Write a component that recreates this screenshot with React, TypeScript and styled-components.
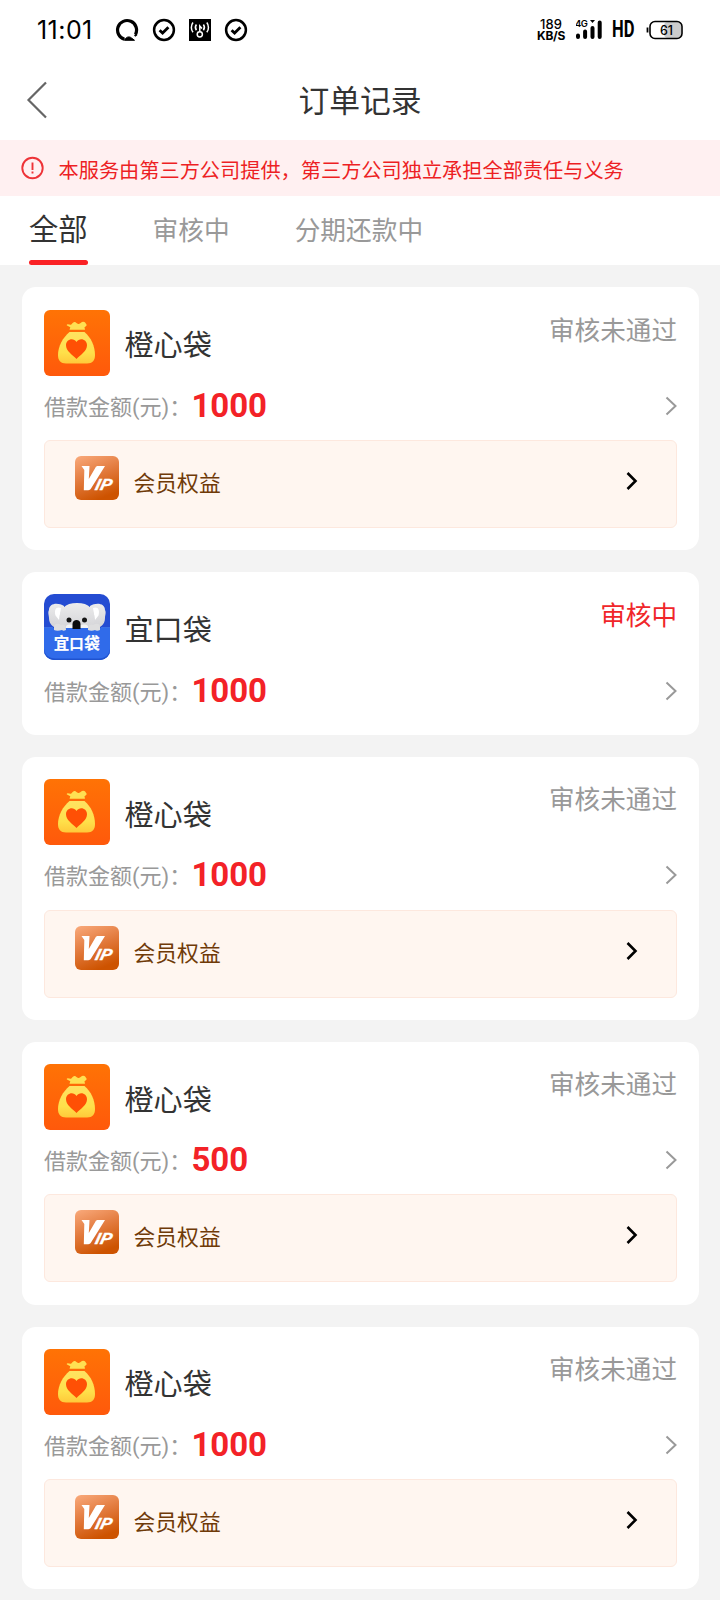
import React from "react";
import styled, { createGlobalStyle } from "styled-components";

const GlobalStyle = createGlobalStyle`
  * { box-sizing: border-box; }
  body {
    margin: 0;
    background: #f3f3f3;
    font-family: Roboto, "Noto Sans CJK SC", sans-serif;
    color: #333;
  }
`;

const Page = styled.div`
  width: 720px;
  height: 1600px;
  overflow: hidden;
  background: #f3f3f3;
`;

const StatusBar = styled.div`
  height: 60px;
  padding: 0 37px 0 37px;
  display: flex;
  align-items: center;
  justify-content: space-between;
  background: #fff;
  color: #000;
`;

const StatusGroup = styled.div<{ $gap: number }>`
  display: flex;
  align-items: center;
  gap: ${(p) => p.$gap}px;
`;

const Clock = styled.span`
  width: 65px;
  font: 400 25px/30px Inter, sans-serif;
  letter-spacing: 0.45px;
  white-space: nowrap;
`;

const NetSpeed = styled.div`
  width: 30px;
  margin-right: 1px;
  display: flex;
  flex-direction: column;
  align-items: center;
  font: 500 13px/11px Inter, sans-serif;
  white-space: nowrap;
  b { font-weight: 700; font-size: 12px; letter-spacing: -0.3px; }
`;

const Hd = styled.span`
  width: 26px;
  margin-right: -1px;
  font: 700 23px/28px "Roboto", sans-serif;
  transform: scaleX(0.72);
  transform-origin: left center;
  white-space: nowrap;
`;

const NavBar = styled.header`
  height: 80px;
  padding: 2px 26px 0;
  display: grid;
  grid-template-columns: 24px 1fr 24px;
  align-items: center;
  background: #fff;
  svg { margin-bottom: 2px; }
`;

const Title = styled.h1`
  margin: 0;
  padding-top: 1px;
  text-align: center;
  font-size: 30.8px;
  font-weight: 400;
  line-height: 44px;
`;

const Notice = styled.div`
  height: 56px;
  padding: 0 21px;
  display: flex;
  align-items: center;
  gap: 14.5px;
  background: #fff0f1;
  color: #ed1f24;
  font-size: 20.2px;
  line-height: 30px;
  white-space: nowrap;
  svg { margin-bottom: 1px; }
  span { padding-top: 5px; }
`;

const Tabs = styled.nav`
  height: 69px;
  padding-left: 29px;
  display: flex;
  gap: 65px;
  background: #fff;
`;

const Tab = styled.div<{ $active?: boolean }>`
  height: 69px;
  font-size: ${(p) => (p.$active ? 29.3 : 25.7)}px;
  line-height: ${(p) => (p.$active ? 68 : 71)}px;
  color: ${(p) => (p.$active ? "#333" : "#999")};
  display: flex;
  flex-direction: column;
`;

const Underline = styled.i`
  height: 5px;
  margin-top: -4px;
  border-radius: 3px;
  background: #fa2125;
`;

const List = styled.main`
  padding: 22.45px 21px 0 22px;
  display: flex;
  flex-direction: column;
  gap: 22px;
`;

const Card = styled.section<{ $vip: boolean }>`
  flex: none;
  height: ${(p) => (p.$vip ? 262.8 : 162.8)}px;
  padding: 22.2px 22px 0;
  border-radius: 14px;
  background: #fff;
`;

const CardHead = styled.div`
  height: 66px;
  display: flex;
  align-items: center;
`;

const Name = styled.span`
  flex: 1;
  margin-left: 14.5px;
  padding-top: 7px;
  font-size: 29.1px;
  line-height: 42px;
`;

const Status = styled.span<{ $pending?: boolean }>`
  align-self: flex-start;
  padding-top: 1.2px;
  font-size: 25.6px;
  line-height: 40px;
  color: ${(p) => (p.$pending ? "#f0262a" : "#999")};
`;

const AmountRow = styled.div`
  height: 64.4px;
  padding-bottom: 4px;
  display: flex;
  align-items: center;
  svg { margin-left: auto; }
`;

const Label = styled.span`
  width: 147.5px;
  font-size: 22px;
  line-height: 32px;
  padding-top: 4px;
  color: #999;
  white-space: nowrap;
`;

const Amount = styled.strong`
  font-family: Roboto, sans-serif;
  font-weight: 700;
  font-size: 33px;
  letter-spacing: -0.1px;
  line-height: 40px;
  color: #f32227;
`;

const VipBox = styled.div`
  height: 88px;
  padding: 15px 38px 0 30px;
  display: flex;
  align-items: flex-start;
  border: 1px solid #fde8de;
  border-radius: 6px;
  background: #fff6f0;
`;

const VipLabel = styled.span`
  flex: 1;
  margin-left: 14.5px;
  padding-top: 12px;
  font-size: 21.8px;
  line-height: 32px;
  color: #6f3a08;
`;

const VipArrow = styled.svg`
  margin-top: 16px;
`;

const CheckBadge = () => (
  <svg width="24" height="24" viewBox="0 0 24 24" fill="none" stroke="#000">
    <circle cx="12" cy="12" r="9.9" strokeWidth="2.5" />
    <path d="M7.6 12.2l3 2.9 5.800-5.800" strokeWidth="2.800" />
  </svg>
);

const RingIcon = () => (
  <svg width="24" height="24" viewBox="0 0 24 24" fill="none" stroke="#000">
    <path d="M9.500 21.200A9.500 9.500 0 1 1 20.500 16.400" strokeWidth="3.200" />
    <path d="M9.500 22.300c1-3 4.500-4.600 7-2.300l3 2.300z" fill="#000" strokeWidth="1" />
    <path d="M20 16.400l1.300 1.600" strokeWidth="2.600" />
  </svg>
);

const CastIcon = () => (
  <svg width="22" height="22" viewBox="0 0 22 22" fill="none" stroke="#fff" strokeWidth="1.500">
    <rect width="22" height="22" fill="#000" stroke="none" />
    <circle cx="10.800" cy="15.300" r="2.600" />
    <path d="M10.800 12.700V7l2.200 2.400" />
    <path d="M7.400 5.500c-1.300 1.800-1.300 4 0 5.800M14.400 5.500c1.300 1.800 1.300 4 0 5.800M4 3.500c-2.200 2.800-2.200 7 0 9.800M17.800 3.500c2.200 2.800 2.200 7 0 9.800" />
  </svg>
);

const SignalIcon = () => (
  <svg width="27" height="22" viewBox="0 0 27 22">
    <text x="-1" y="8" fontFamily="Inter, sans-serif" fontSize="9.500" fontWeight="600" letterSpacing="-0.500">4G</text>
    <g stroke="#000" strokeWidth="4" strokeLinecap="round">
      <path d="M2 16.500v1.500M9.100 12.500v5.500M16.500 9v9M23.700 3.500V18" />
    </g>
    <path d="M14 1h5l-2.500 3z" />
  </svg>
);

const BatteryIcon = () => (
  <svg width="37" height="20" viewBox="0 0 37 20">
    <rect x="18" y="2" width="17" height="16" rx="4" fill="#ccc" />
    <rect x="4" y="1.500" width="32" height="17" rx="5" fill="none" stroke="#000" strokeWidth="1.600" />
    <path d="M1.500 7.500v5" stroke="#000" strokeWidth="1.800" />
    <text x="20.500" y="14.500" textAnchor="middle" fontFamily="Inter, sans-serif" fontSize="12.500" fontWeight="500">61</text>
  </svg>
);

const BackIcon = () => (
  <svg width="24" height="40" viewBox="0 0 24 40" fill="none" stroke="#666" strokeWidth="2.200">
    <path d="M20 2.500L2.500 20 20 37.500" />
  </svg>
);

const AlertIcon = () => (
  <svg width="23" height="24" viewBox="0 0 23 24" fill="none" stroke="#ee3338" strokeWidth="1.900">
    <circle cx="11.500" cy="12" r="10.200" />
    <path d="M11.500 6.500v7.500M11.500 15.500v2" />
  </svg>
);

const RowArrow = () => (
  <svg width="12" height="20" viewBox="0 0 12 20" fill="none" stroke="#999" strokeWidth="2">
    <path d="M1.500 1.500L10.500 10l-9 8.500" />
  </svg>
);

const BagLogo = () => (
  <svg width="66" height="66" viewBox="0 0 66 66">
    <defs>
      <linearGradient id="bagBack" x1="0" y1="0" x2="0" y2="1">
        <stop offset="0" stopColor="#ff7305" />
        <stop offset="1" stopColor="#ff590b" />
      </linearGradient>
      <linearGradient id="bagFront" x1="0" y1="0" x2="0" y2="1">
        <stop offset="0" stopColor="#ffe262" />
        <stop offset="0.650" stopColor="#ffe04a" />
        <stop offset="1" stopColor="#ffc93a" />
      </linearGradient>
    </defs>
    <rect width="66" height="66" rx="6" fill="url(#bagBack)" />
    <path d="M25.500 19.800l.8-2.600-3.300-1.700c-.6-.5 0-1.500.8-1.300l2.800.5c1.400.300 2-2.800 4-2.600 1.700.200 2.300 2.200 4 1.800 2-.5 2.700-2.200 4.600-2.200 2 0 2.600 1.800 3.300 2.800.5.800-.3 1.700-1.300 2.200l-.7.500.5 2.600z" fill="#ffe052" />
    <path d="M25.500 22h15c6.500 5.500 10.500 14 10.500 23 0 5.500-2.500 8.500-8 8.500H22c-5.500 0-8-3-8-8.500 0-9 5-17.500 11.500-23z" fill="url(#bagFront)" />
    <path d="M32.500 49C28 44.500 22 41 22 35.300c0-6.300 7.500-8 10.500-3.300 3-4.700 10.500-3 10.500 3.300C43 41 37 44.500 32.500 49z" fill="#ff5005" />
  </svg>
);

const KoalaLogo = () => (
  <svg width="66" height="66" viewBox="0 0 66 66">
    <defs>
      <linearGradient id="koalaHead" x1="0" y1="0" x2="0" y2="1">
        <stop offset="0" stopColor="#ececec" />
        <stop offset="1" stopColor="#d2d2d6" />
      </linearGradient>
      <clipPath id="koalaClip">
        <rect width="66" height="66" rx="10" />
      </clipPath>
    </defs>
    <g clipPath="url(#koalaClip)">
      <rect width="66" height="66" fill="#244cd2" />
      <path d="M20 12C14 8 5 9 5 16c-1.500 3 0 5 0 8 0 7 6 12 15 10zM46 12c6-4 15-3 15 4 1.500 3 0 5 0 8 0 7-6 12-15 10z" fill="url(#koalaHead)" />
      <path d="M17 14c-5-2-7 2-5.500 7.500L15 26zM49 14c5-2 7 2 5.500 7.500L51 26z" fill="#fff" />
      <path d="M15.500 26C15 15 21 9 33 9s18 6 17.500 17c0 7-3 11-9 11h-17c-6 0-9-4-9-11z" fill="url(#koalaHead)" />
      <path d="M22 32c3-3 8-1 10 0h2c2-1 7-3 10 0v4H22z" fill="#f4f4f4" />
      <rect y="34" width="66" height="32" fill="#306bea" />
      <path d="M0 33.500h9M57 33.500h9" stroke="#3a6fe4" />
      <path d="M10 36v-3c0-4 5-4 7-2 3-1 5 0 5 5-2 1-3 1-4 0-3 1-6 1-8 0zM44 36c0-5 2-6 5-5 3-2 7-2 7 2v3c-2 1-4 1-5 0-2 1-5 1-7 0z" fill="#dededf" />
      <circle cx="25" cy="26" r="2.500" fill="#151515" />
      <circle cx="40.500" cy="26" r="2.500" fill="#151515" />
      <path d="M28.500 35v-5c0-5.500 8-5.500 8 0v5z" fill="#0b0b0b" />
      <path d="M0 55c1 6 5 9.500 11 9.500h44c6 0 10-3.500 11-9.500v11H0z" fill="#1f52cf" />
      <g fill="#fff" stroke="#fff" strokeWidth="0.200" fontFamily="'Noto Sans CJK SC', sans-serif" fontWeight="700" textAnchor="middle">
        <text x="17.500" y="55" fontSize="15.500">宜</text>
        <text x="32.500" y="54.500" fontSize="14.500">口</text>
        <text x="48" y="55" fontSize="15.500">袋</text>
      </g>
    </g>
  </svg>
);

const VipLogo = () => (
  <svg width="44" height="44" viewBox="0 0 44 44">
    <defs>
      <linearGradient id="vipBack" x1="0.100" y1="0" x2="0.500" y2="1">
        <stop offset="0" stopColor="#f8a778" />
        <stop offset="0.500" stopColor="#e27a3d" />
        <stop offset="1" stopColor="#cd5300" />
      </linearGradient>
    </defs>
    <rect width="44" height="44" rx="6" fill="url(#vipBack)" />
    <path d="M6.500 10h8l-.7 13L20.500 11.500c.5-1 1.200-1.500 2.300-1.500H30L16 32.500c-.7 1.200-1.500 1.700-2.700 1.700H8.800L9.300 14z" fill="#fff" />
    <text transform="translate(19.300 33.800) skewX(-14)" fill="#fff" stroke="#fff" strokeWidth="0.300" fontFamily="Roboto, sans-serif" fontStyle="italic" fontWeight="700" fontSize="15.500" textLength="16.500" lengthAdjust="spacingAndGlyphs">IP</text>
  </svg>
);

type Order = { name: string; amount: number; pending?: boolean };

const orders: Order[] = [
  { name: "橙心袋", amount: 1000 },
  { name: "宜口袋", amount: 1000, pending: true },
  { name: "橙心袋", amount: 1000 },
  { name: "橙心袋", amount: 500 },
  { name: "橙心袋", amount: 1000 },
];

const OrderCard = ({ name, amount, pending }: Order) => (
  <Card $vip={!pending}>
    <CardHead>
      {pending ? <KoalaLogo /> : <BagLogo />}
      <Name>{name}</Name>
      <Status $pending={pending}>{pending ? "审核中" : "审核未通过"}</Status>
    </CardHead>
    <AmountRow>
      <Label>借款金额(元)：</Label>
      <Amount>{amount}</Amount>
      <RowArrow />
    </AmountRow>
    {!pending && (
      <VipBox>
        <VipLogo />
        <VipLabel>会员权益</VipLabel>
        <VipArrow width="12" height="18" viewBox="0 0 12 18" fill="none" stroke="#000" strokeWidth="2.600">
          <path d="M1.500 1l8 8-8 8" />
        </VipArrow>
      </VipBox>
    )}
  </Card>
);

export default function App() {
  return (
    <Page lang="zh-CN">
      <GlobalStyle />
      <StatusBar>
        <StatusGroup $gap={13}>
          <Clock>11:01</Clock>
          <RingIcon />
          <CheckBadge />
          <CastIcon />
          <CheckBadge />
        </StatusGroup>
        <StatusGroup $gap={9}>
          <NetSpeed>
            <span>189</span>
            <b>KB/S</b>
          </NetSpeed>
          <SignalIcon />
          <Hd>HD</Hd>
          <BatteryIcon />
        </StatusGroup>
      </StatusBar>
      <NavBar>
        <BackIcon />
        <Title>订单记录</Title>
      </NavBar>
      <Notice>
        <AlertIcon />
        <span>本服务由第三方公司提供，第三方公司独立承担全部责任与义务</span>
      </Notice>
      <Tabs>
        <Tab $active>
          全部
          <Underline />
        </Tab>
        <Tab>审核中</Tab>
        <Tab>分期还款中</Tab>
      </Tabs>
      <List>
        {orders.map((order, i) => (
          <OrderCard key={i} {...order} />
        ))}
      </List>
    </Page>
  );
}
